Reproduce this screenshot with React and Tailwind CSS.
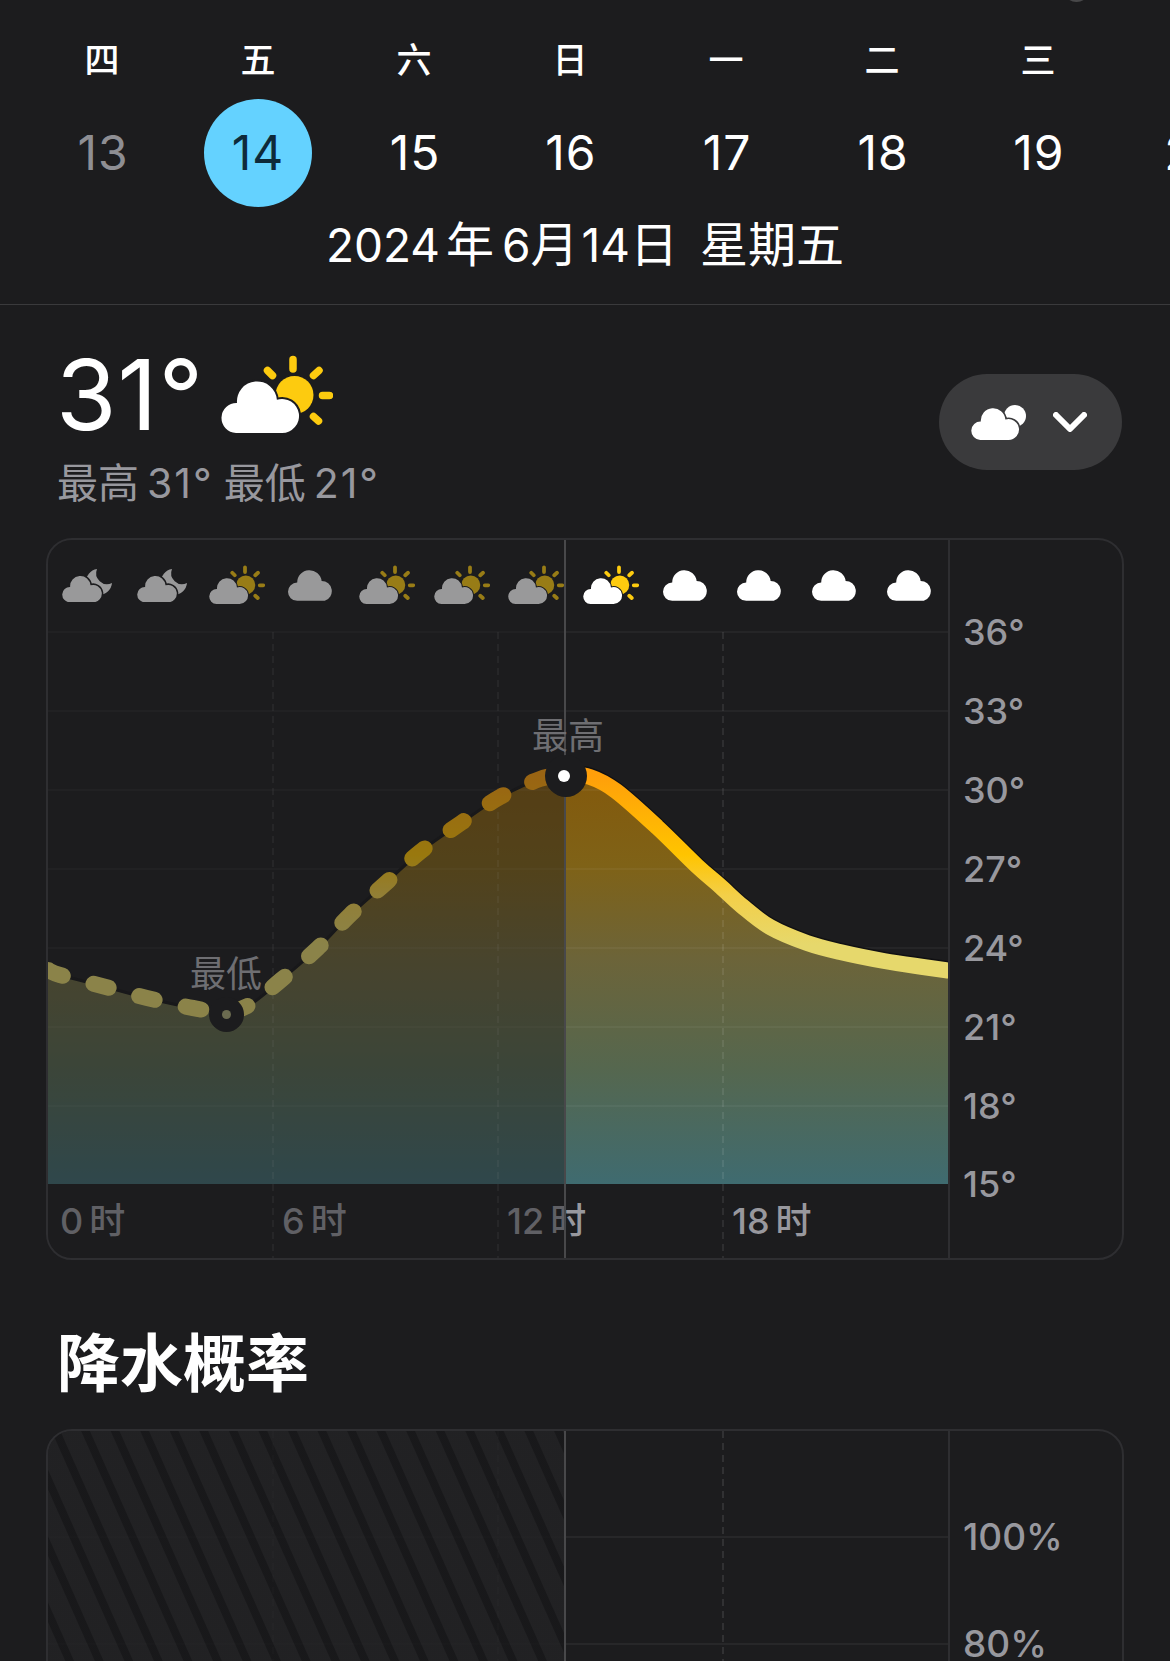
const left = [[48,970],[60,975],[102,986],[147,998],[193,1008],[226,1012],[251,1004],[281,980],[318,948],[350,915],[386,883],[420,852],[461,823],[500,797],[540,779],[565,774]];
const right = [[565,774],[590,777],[616,791],[657,827],[697,866],[720,886],[742,906],[770,927],[807,943],[840,952],[884,961],[923,967],[948,970.5],[975,974]];

function spline(p) {
  let d = `M${p[0][0]} ${p[0][1]}`;
  for (let i = 0; i < p.length - 1; i++) {
    const a = p[Math.max(i - 1, 0)], b = p[i], c = p[i + 1], e = p[Math.min(i + 2, p.length - 1)];
    d += `C${b[0] + (c[0] - a[0]) / 6} ${b[1] + (c[1] - a[1]) / 6} ${c[0] - (e[0] - b[0]) / 6} ${c[1] - (e[1] - b[1]) / 6} ${c[0]} ${c[1]}`;
  }
  return d;
}
const leftD = spline(left);
const rightD = spline(right);
const fillD = spline([[40,968], ...left, ...right.slice(1)]) + "L975 1184L40 1184Z";

const BG = "#1c1c1e";
const CLOUD = "M15 78A15 15 0 1 1 16 48A20 20 0 0 1 55.9 44.8A17 17 0 1 1 61 78Z";

function SunCloud({ className }) {
  return (
    <svg viewBox="0 0 112 80" className={className} fill="none">
      <circle cx="73.5" cy="40" r="19" fill="#fdcb0f" />
      <g stroke="#fdcb0f" strokeWidth="7.500" strokeLinecap="round">
        <path d="M72 4.500V14M46.500 15.500L51.500 20.500M98 15.500L92.500 20.500M101.500 40.500H108.500M92.500 61.500L97.500 66" />
      </g>
      <path d={CLOUD} fill="#fff" stroke={BG} strokeWidth="4" paintOrder="stroke" />
    </svg>
  );
}

function MoonCloud() {
  return (
    <svg viewBox="0 0 50 33" className="w-[50px] h-[33px]" fill="none">
      <path d="M35 0A13 13 0 1 0 50 14A11 11 0 0 1 35 0Z" fill="#fff" />
      <g transform="translate(0 -6.500) scale(0.51)">
        <path d={CLOUD} fill="#fff" stroke={BG} strokeWidth="6" paintOrder="stroke" />
      </g>
    </svg>
  );
}

function Cloud() {
  return (
    <svg viewBox="0 0 46 30" className="w-[47px] h-[31px]" fill="#fff">
      <path d="M9 30A9 9 0 0 1 9 12A12 12 0 0 1 32.900 10.500A10 10 0 0 1 36 30Z" />
    </svg>
  );
}

function PillCloud() {
  return (
    <svg viewBox="0 0 56 35" className="w-[56px] h-[35px]" fill="none">
      <circle cx="44" cy="11" r="11" fill="#fff" />
      <g transform="translate(0 -13) scale(0.615)">
        <path d={CLOUD} fill="#fff" stroke="#3a3a3c" strokeWidth="5" paintOrder="stroke" />
      </g>
    </svg>
  );
}

const icons = ["moon","moon","sun","cloud","sun","sun","sun","sun","cloud","cloud","cloud","cloud"];
const hours = [["0","pl-[12px]"],["6","pl-[9px]"],["12","pl-[9px]"],["18","pl-[9px]"]];
const temps = ["36°","33°","30°","27°","24°","21°","18°","15°"];
const weekdays = ["四","五","六","日","一","二","三"];
const nums = ["13","14","15","16","17","18","19","20"];

export default function App() {
  return (
    <div className="relative h-[1661px] overflow-hidden bg-[#1c1c1e] text-white [font-family:Inter,'Noto_Sans_CJK_SC',sans-serif]">
      <div className="absolute left-[1063px] -top-[25px] w-[27px] h-[27px] rounded-full bg-[#48484a]" />

      <header className="h-[304px] pt-[30px]">
        <div className="flex pl-[24px] h-[60px] items-center text-[35px] font-medium">
          {weekdays.map((w) => (
            <div key={w} className="w-[156px] shrink-0 text-center">{w}</div>
          ))}
        </div>
        <div className="flex pl-[25px] h-[108px] mt-[9px] overflow-hidden text-[48px] tracking-[1px]">
          {nums.map((n, i) => (
            <div key={n} className="w-[156px] shrink-0 flex justify-center items-center">
              <div className={
                i === 1
                  ? "w-[108px] h-[108px] -ml-[2px] rounded-full bg-[#64d2ff] text-[#0e2a3a] flex items-center justify-center"
                  : i === 0
                  ? "text-[#8e8e93]"
                  : "text-white"
              }>{n}</div>
            </div>
          ))}
        </div>
        <div className="h-[60px] mt-[8px] flex items-center justify-center text-[48px]">
          <span className="text-[46px]">2024</span>
          <span className="ml-[6px]">年</span>
          <span className="ml-[8px] text-[46px]">6</span>
          <span>月</span>
          <span className="ml-[3px] text-[46px]">14</span>
          <span>日</span>
          <span className="ml-[22px]">星期五</span>
        </div>
      </header>
      <div className="h-px bg-[#3a3a3c]" />

      <section className="flex justify-between pl-[57px] pr-[48px] h-[233px]">
        <div>
          <div className="flex items-center h-[100px] mt-[40px] gap-[17px]">
            <span className="text-[98px] leading-none tracking-[1px] -ml-[1px]">31°</span>
            <SunCloud className="w-[112px] h-[80px]" />
          </div>
          <div className="h-[56px] mt-[11px] flex items-center text-[41px] text-[#98989e]">
            <span>最高</span>
            <span className="ml-[8px] tracking-[2px]">31°</span>
            <span className="ml-[10px]">最低</span>
            <span className="ml-[8px] tracking-[2px]">21°</span>
          </div>
        </div>
        <div className="mt-[69px] w-[183px] h-[96px] rounded-full bg-[#3a3a3c] flex items-center pl-[32px] gap-[26px]">
          <PillCloud />
          <svg viewBox="0 0 34 20" className="w-[34px] h-[20px]" fill="none" stroke="#fff" strokeWidth="6" strokeLinecap="round" strokeLinejoin="round">
            <path d="M3 3L17 17L31 3" />
          </svg>
        </div>
      </section>

      <div className="relative mx-[46px] w-[1078px] h-[722px] flex rounded-[26px] border-2 border-[#2e2e31] overflow-hidden">
        <div className="relative w-[900px] h-full flex flex-col">
          <svg viewBox="48 540 900 720" className="absolute left-0 top-0 w-[900px] h-[720px]" fill="none">
            <defs>
              <linearGradient id="fillG" gradientUnits="userSpaceOnUse" x1="0" y1="775" x2="0" y2="1184">
                <stop offset="0" stopColor="#83590c" />
                <stop offset="0.22" stopColor="#7f6217" />
                <stop offset="0.45" stopColor="#6c6439" />
                <stop offset="0.72" stopColor="#55674f" />
                <stop offset="1" stopColor="#3f6b70" />
              </linearGradient>
              <linearGradient id="lineG" gradientUnits="userSpaceOnUse" x1="0" y1="775" x2="0" y2="975">
                <stop offset="0" stopColor="#ff9f0a" />
                <stop offset="0.4" stopColor="#ffc400" />
                <stop offset="0.6" stopColor="#f3cf48" />
                <stop offset="0.85" stopColor="#e6d86c" />
                <stop offset="1" stopColor="#e6d86c" />
              </linearGradient>
            </defs>
            <path d={fillD} fill="url(#fillG)" />
            <g stroke="#ffffff" strokeOpacity="0.06" strokeWidth="1.500">
              <path d="M48 632H948M48 711H948M48 790H948M48 869H948M48 948H948M48 1027H948M48 1106H948" />
            </g>
            <path d="M273 632V1260M498 632V1260M723 632V1260" stroke="#ffffff" strokeOpacity="0.11" strokeWidth="1.500" strokeDasharray="7 5" />
            <path d={leftD} stroke="#141416" strokeWidth="3" />
            <path d={rightD} stroke="#101012" strokeWidth="16" transform="translate(0 -1.500)" />
            <path d={leftD} stroke="url(#lineG)" strokeWidth="16" strokeLinecap="round" strokeDasharray="16 31.500" />
            <path d={rightD} stroke="url(#lineG)" strokeWidth="16" />
          </svg>

          <div className="relative h-[92px] grid grid-cols-12 pl-[2px] pb-[2px]">
            {icons.map((k, i) => (
              <div key={i} className="flex items-center justify-center">
                {k === "moon" ? <MoonCloud /> : k === "cloud" ? <Cloud /> : <SunCloud className="w-[56px] h-[40px] shrink-0" />}
              </div>
            ))}
          </div>

          <div className="relative h-[552px] shrink-0" />

          <div className="relative flex-1 grid grid-cols-4 text-[36px] text-[#98989e] font-medium">
            {hours.map(([n, pad]) => (
              <div key={n} className={`${pad} pt-[15px] leading-[44px] whitespace-nowrap`}>
                {n}<span className="ml-[6px]">时</span>
              </div>
            ))}
          </div>

          <div className="absolute left-0 top-0 bottom-0 w-[516px] bg-[#1c1c1e]/45" />
          <div className="absolute left-[516px] top-0 bottom-0 w-[2px] bg-[#48484a]" />
          <div className="absolute left-[484px] top-[174px] text-[36px] leading-[44px] text-[#6e6e72] whitespace-nowrap">最高</div>
          <div className="absolute left-[142px] top-[412px] text-[36px] leading-[44px] text-[#6e6e72] whitespace-nowrap">最低</div>
          <div className="absolute left-[497px] top-[215px] w-[42px] h-[42px] rounded-full bg-[#1c1c1e] flex items-center justify-center">
            <div className="w-[12px] h-[12px] rounded-full bg-white -ml-[5px]" />
          </div>
          <div className="absolute left-[161px] top-[457px] w-[35px] h-[35px] rounded-full bg-[#1c1c1e] flex items-center justify-center">
            <div className="w-[9px] h-[9px] rounded-full bg-[#6b6b50]" />
          </div>
        </div>

        <div className="flex-1 border-l-2 border-[#2e2e31] pl-[13px] pt-[53px] text-[36px] text-[#98989e] font-medium">
          {temps.map((t) => (
            <div key={t} className="h-[78.86px] flex items-center">{t}</div>
          ))}
        </div>
      </div>

      <h2 className="h-[169px] pl-[57px] pt-[71px] text-[63px] leading-[64px] font-bold">降水概率</h2>

      <div className="relative mx-[46px] w-[1078px] h-[500px] flex rounded-[26px] border-2 border-[#2e2e31] overflow-hidden">
        <div className="relative w-[900px] h-full">
          <svg viewBox="48 1431 900 496" className="absolute left-0 top-0 w-[900px] h-[496px]" fill="none">
            <path d="M48 1537H948M48 1644H948" stroke="#ffffff" strokeOpacity="0.07" strokeWidth="1.500" />
            <path d="M273 1431V1927M498 1431V1927M723 1431V1927" stroke="#ffffff" strokeOpacity="0.13" strokeWidth="1.500" strokeDasharray="7 5" />
          </svg>
          <div className="absolute left-0 top-0 bottom-0 w-[516px] opacity-[0.88] bg-[repeating-linear-gradient(66deg,#222224_0px,#222224_15.5px,#18181a_16.5px,#18181a_23.5px,#222224_24.5px,#222224_27px)]" />
          <div className="absolute left-[516px] top-0 bottom-0 w-[2px] bg-[#48484a]" />
        </div>
        <div className="flex-1 border-l-2 border-[#2e2e31] pl-[13px] pt-[52px] text-[37px] text-[#98989e] font-medium">
          {["100%", "80%"].map((t) => (
            <div key={t} className="h-[107px] flex items-center">{t}</div>
          ))}
        </div>
      </div>
    </div>
  );
}
